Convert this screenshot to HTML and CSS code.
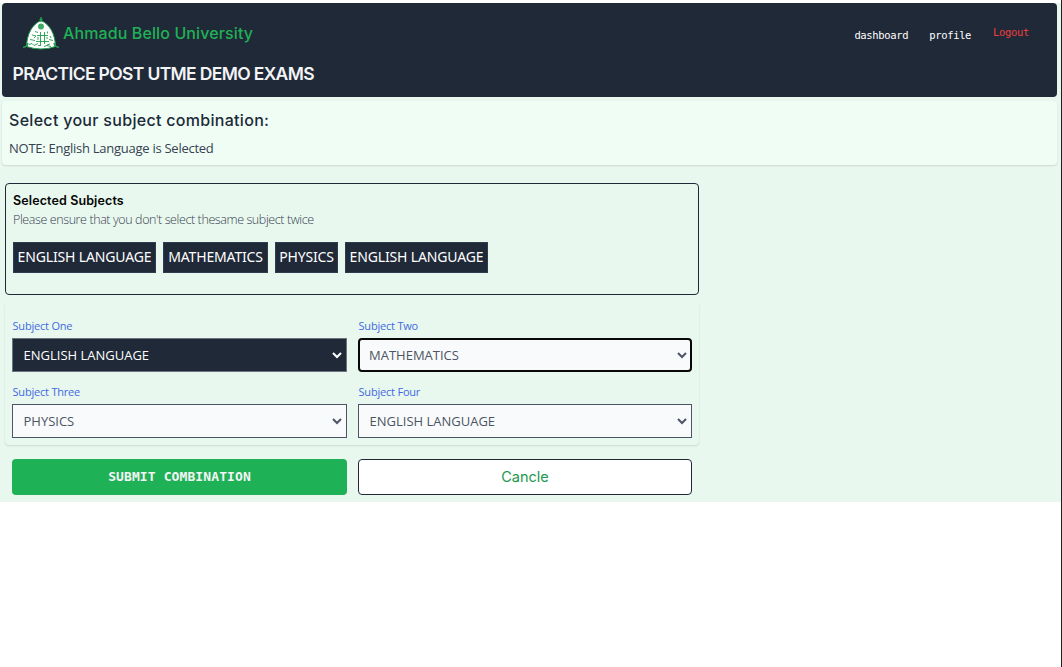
FILE: index.html
```html
<!DOCTYPE html>
<html lang="en">
<head>
<meta charset="utf-8">
<title>Practice Post UTME Demo Exams</title>
<link rel="stylesheet" href="styles.css">
</head>
<body>
<main class="page">
  <header class="header">
    <div class="topbar">
      <div class="brand">
        <svg class="logo" viewBox="0 0 36 33" width="36" height="33">
          <path d="M18 3.500C9 7.500 4 17 3.500 29.500Q18 34.500 32.500 29.500C32 17 27 7.500 18 3.500Z" fill="#fff" stroke="#1f9d4c" stroke-width="1"/>
          <path d="M18 0v5M16.500 2.500h3M0 30.500l4-1.500 1-3M36 30.500l-4-1.500-1-3" fill="none" stroke="#1f9d4c" stroke-width="1.500"/>
          <circle cx="18" cy="9.500" r="3" fill="#1f9d4c" fill-opacity=".85"/>
          <path d="M17.500 15v13M21.500 15v12M14 18.500h11M13 24.500h13M12 14.500l3 1M9 18l4 1-2 2M7 22.500l5 1M6 27.500l3-1 2 2 4-2M24.500 14.500v2M27 19l1 2M26 22.500l4 1M27 27l-3 1M15 28.500h3M21 29.500l3-1 4 1M15 20v3M24 20v2" fill="none" stroke="#1f9d4c" stroke-width=".9"/>
        </svg>
        <span class="brand-name">Ahmadu Bello University</span>
      </div>
      <nav class="nav">
        <a class="link dashboard">dashboard</a>
        <a class="link profile">profile</a>
        <a class="link logout">Logout</a>
      </nav>
    </div>
    <h1 class="title">PRACTICE POST UTME DEMO EXAMS</h1>
  </header>

  <section class="intro">
    <h2 class="intro-title">Select your subject combination:</h2>
    <p class="note">NOTE: English Language is Selected</p>
  </section>

  <section class="selected">
    <h3 class="selected-title">Selected Subjects</h3>
    <p class="hint">Please ensure that you don't select thesame subject twice</p>
    <div class="chips">
      <span class="chip wide">ENGLISH LANGUAGE</span>
      <span class="chip maths">MATHEMATICS</span>
      <span class="chip physics">PHYSICS</span>
      <span class="chip wide">ENGLISH LANGUAGE</span>
    </div>
  </section>

  <form class="form">
    <div class="fields">
      <label class="field"><span class="label">Subject One</span>
        <span class="control dark"><select class="select"><option>ENGLISH LANGUAGE</option></select><svg class="chevron" viewBox="0 0 10 7"><path d="M1 1l4 4 4-4"/></svg></span></label>
      <label class="field"><span class="label">Subject Two</span>
        <span class="control active"><select class="select"><option>MATHEMATICS</option></select><svg class="chevron" viewBox="0 0 10 7"><path d="M1 1l4 4 4-4"/></svg></span></label>
      <label class="field"><span class="label">Subject Three</span>
        <span class="control"><select class="select"><option>PHYSICS</option></select><svg class="chevron" viewBox="0 0 10 7"><path d="M1 1l4 4 4-4"/></svg></span></label>
      <label class="field"><span class="label">Subject Four</span>
        <span class="control"><select class="select"><option>ENGLISH LANGUAGE</option></select><svg class="chevron" viewBox="0 0 10 7"><path d="M1 1l4 4 4-4"/></svg></span></label>
    </div>
    <div class="actions">
      <button class="button submit" type="button">SUBMIT COMBINATION</button>
      <button class="button cancel" type="button">Cancle</button>
    </div>
  </form>
</main>
</body>
</html>
```
FILE: styles.css
```css
* { box-sizing: border-box; }
html { height: 100%; background: #fff; }
body { margin: 0; min-height: 100%; padding-top: 3px; border-right: 1px solid #202020; font-family: "Open Sans", sans-serif; }
h1, h2, h3, p { margin: 0; }
.page { height: 499px; padding: 0 4px 0 2px; background: #e8f8ee; }
.header { height: 94px; padding: 14px 28px 0 10px; background: #202938; border-radius: 4px; }
.topbar { display: flex; justify-content: space-between; height: 33px; }
.brand { display: flex; align-items: center; gap: 4px; padding-left: 11px; }
.logo { display: block; }
.brand-name { color: #1fb155; font: 500 16px/33px "Inter", sans-serif; letter-spacing: 0.110px; white-space: nowrap; }
.nav { display: flex; align-items: flex-start; padding-top: 11px; }
.link { color: #fff; font: 10.500px/14px "DejaVu Sans Mono", monospace; letter-spacing: -0.340px; white-space: nowrap; }
.dashboard { margin-right: 21px; }
.profile { margin-right: 22px; }
.logout { color: #ef3f3f; margin-top: -3px; }
.title { margin-top: 11px; padding-left: 0.5px; color: #f3f4f6; font: 600 17.500px/26px "Inter", sans-serif; letter-spacing: -0.650px; white-space: nowrap; }
.intro { height: 64px; margin-top: 4px; padding: 7px 7px; background: #effdf5; border-radius: 4px; box-shadow: 0 1px 2px rgba(0,0,0,.13); }
.intro-title { color: #202938; font: 500 16px/24px "Inter", sans-serif; letter-spacing: 0.300px; white-space: nowrap; }
.note { margin-top: 6px; color: #374151; font: 13px/20px "Open Sans", sans-serif; letter-spacing: -0.260px; white-space: nowrap; }
.selected { width: 694px; height: 112px; margin: 18px 0 0 3px; padding: 9px 7px; border: 1px solid #202938; border-radius: 4px; }
.selected-title { color: #050505; font: 600 12.500px/16px "Inter", sans-serif; letter-spacing: 0.120px; }
.hint { margin-top: 2px; color: #374151; font: 300 12.500px/18px "Open Sans", sans-serif; letter-spacing: -0.400px; white-space: nowrap; }
.chips { display: flex; gap: 7px; margin-top: 13px; }
.chip { height: 31px; border: 1px solid #2e3d4d; background: #202938; color: #fff; font: 14px/28px "Noto Sans", sans-serif; letter-spacing: -0.150px; text-align: center; white-space: nowrap; }
.wide { width: 143px; }
.maths { width: 105px; }
.physics { width: 63px; }
.form { width: 694px; margin: 7px 0 0 3px; }
.fields { display: grid; grid-template-columns: 335px 334px; gap: 11px; height: 143px; padding: 16px 7px 0; align-content: start; row-gap: 12px; border-radius: 4px; box-shadow: 0 1px 2px rgba(0,0,0,.13); }
.field { display: block; height: 54px; }
.label { display: block; height: 20px; padding-left: 0.5px; color: #4169e1; font: 11px/16px "Open Sans", sans-serif; letter-spacing: -0.200px; }
.control { display: block; position: relative; height: 34px; border: 1px solid #4b5563; background: #f9fafb; color: #4b5563; }
.select { display: block; width: 100%; height: 32px; padding: 0 10.5px; border: 0; outline: 0; appearance: none; background: transparent; color: inherit; font: 13px/20px "Open Sans", sans-serif; }
.chevron { position: absolute; right: 4px; top: 13px; width: 10px; height: 7px; fill: none; stroke: currentColor; stroke-width: 2; }
.dark { background: #202938; color: #fff; border-color: #6b7280; }
.active { border: 2px solid #080808; border-radius: 4px; }
.active .select { height: 30px; padding-left: 9px; }
.active .chevron { right: 3px; top: 12px; }
.actions { display: grid; grid-template-columns: 335px 334px; gap: 11px; padding: 14px 7px 0; }
.button { height: 36px; padding: 0; border-radius: 4px; }
.submit { border: 0; background: #1fb155; color: #f3f4f6; font: bold 13px/20px "DejaVu Sans Mono", monospace; letter-spacing: 0.1px; }
.cancel { border: 1px solid #202938; background: #fff; color: #23984f; font: 14.500px/20px "Inter", sans-serif; }
```
